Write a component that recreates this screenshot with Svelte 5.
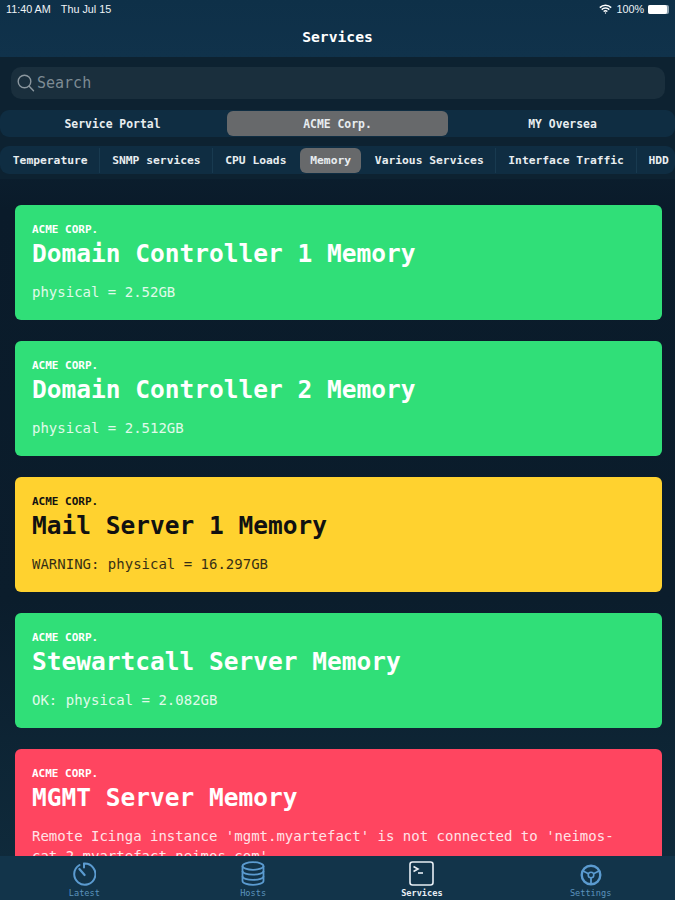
<script>
  const groups = ["Service Portal", "ACME Corp.", "MY Oversea"];
  const tabs = ["Temperature", "SNMP services", "CPU Loads", "Memory", "Various Services", "Interface Traffic", "HDD"];
  const services = [
    { name: "Domain Controller 1 Memory", output: "physical = 2.52GB", state: "ok" },
    { name: "Domain Controller 2 Memory", output: "physical = 2.512GB", state: "ok" },
    { name: "Mail Server 1 Memory", output: "WARNING: physical = 16.297GB", state: "warning" },
    { name: "Stewartcall Server Memory", output: "OK: physical = 2.082GB", state: "ok" },
    { name: "MGMT Server Memory", output: "Remote Icinga instance 'mgmt.myartefact' is not connected to 'neimos-cat-2.myartefact.neimos.com'", state: "critical" }
  ];
</script>

<div class="screen">
  <header class="top">
    <div class="status">
      <span class="clock">11:40 AM</span>
      <span>Thu Jul 15</span>
      <span class="spacer"></span>
      <svg class="wifi" width="13" height="10" viewBox="0 0 13 10" fill="none" stroke="#fff" stroke-width="1.5">
        <path d="M0.8 3.6 C4 0.4 9 0.4 12.2 3.6" />
        <path d="M2.7 5.6 C4.8 3.6 8.2 3.6 10.3 5.6" />
        <path d="M4.6 7.5 C5.7 6.6 7.3 6.6 8.4 7.5" />
        <circle cx="6.5" cy="9" r="0.7" fill="#fff" stroke="none" />
      </svg>
      <span>100%</span>
      <span class="battery"><span class="battery-fill"></span></span>
    </div>
    <h1>Services</h1>
  </header>

  <div class="filters">
    <div class="search">
      <svg width="18" height="18" viewBox="0 0 18 18" fill="none" stroke="#8b979f" stroke-width="1.4">
        <circle cx="7.5" cy="7.5" r="6.3" />
        <path d="M12.2 12.2 L16.5 16.8" stroke-linecap="round" />
      </svg>
      <span>Search</span>
    </div>

    <div class="segments">
      {#each groups as group, i}
        <div class="segment" class:active={i === 1}>{group}</div>
      {/each}
    </div>

    <div class="tabs">
      {#each tabs as tab, i}
        <div class="tab" class:active={tab === "Memory"} class:divided={i === 0 || i === 1 || i === 4 || i === 5}>{tab}</div>
      {/each}
    </div>
  </div>

  <main class="list">
    {#each services as service}
      <article class="card {service.state}">
        <p class="company">ACME CORP.</p>
        <h2>{service.name}</h2>
        <p class="output">{service.output}</p>
      </article>
    {/each}
  </main>

  <nav class="tabbar">
    <div class="item">
      <svg width="24" height="24" viewBox="0 0 24 24" fill="none" stroke="#5b9bd0" stroke-width="2">
        <path d="M7.5 3 A10.6 10.6 0 1 0 12 1.6 L12 5.4" stroke-linecap="round" />
        <path d="M7.4 7 L12.6 13" stroke-width="2.2" stroke-linecap="round" />
      </svg>
      <span>Latest</span>
    </div>
    <div class="item">
      <svg width="24" height="25" viewBox="0 0 24 25" fill="none" stroke="#5b9bd0" stroke-width="1.8">
        <ellipse cx="12" cy="5" rx="10.5" ry="3.8" />
        <path d="M1.5 5 V20 C1.5 22 6 23.8 12 23.8 C18 23.8 22.5 22 22.5 20 V5" />
        <path d="M1.5 10 C1.5 12 6 13.7 12 13.7 C18 13.7 22.5 12 22.5 10" />
        <path d="M1.5 15.2 C1.5 17.2 6 18.9 12 18.9 C18 18.9 22.5 17.2 22.5 15.2" />
      </svg>
      <span>Hosts</span>
    </div>
    <div class="item current">
      <svg width="25" height="25" viewBox="0 0 25 25" fill="none" stroke="#e8eef4" stroke-width="1.6">
        <rect x="1" y="1" width="23" height="23" rx="2.5" />
        <path d="M4.5 5.5 L9 8 L4.5 10.5" />
        <path d="M9 12 H14" />
      </svg>
      <span>Services</span>
    </div>
    <div class="item">
      <svg width="22" height="22" viewBox="0 0 22 22" fill="none" stroke="#5b9bd0">
        <circle cx="11" cy="11" r="9.3" stroke-width="2.4" />
        <circle cx="11" cy="11" r="2.8" stroke-width="1.6" />
        <path d="M8.5 9.7 L3 7 M13.5 9.7 L19 7 M11 13.8 V20" stroke-width="1.8" />
      </svg>
      <span>Settings</span>
    </div>
  </nav>
</div>

<style>
  :global(body) {
    background: #0c1f2e;
  }

  .screen {
    display: flex;
    flex-direction: column;
    width: 675px;
    height: 900px;
    overflow: hidden;
    font-family: "DejaVu Sans Mono", "Liberation Mono", monospace;
    color: #fff;
    background: linear-gradient(180deg, #0f2a3d 0, #0a1b2a 210px, #0b1d2c 600px, #0f2a3b 860px);
  }

  .top {
    flex: none;
    height: 57px;
    background: linear-gradient(180deg, #0e3048, #10324b);
  }

  .status {
    display: flex;
    align-items: center;
    gap: 4px;
    height: 18px;
    padding: 0 6px;
    font-family: "Liberation Sans", Arial, sans-serif;
    font-size: 10.8px;
    color: #eef3f6;
  }

  .clock {
    margin-right: 6px;
  }

  .spacer {
    flex: 1;
  }

  .battery {
    width: 21px;
    height: 9px;
    border-radius: 2px;
    background: #8ea2b0;
  }

  .battery-fill {
    display: block;
    width: 19px;
    height: 9px;
    border-radius: 2px;
    background: #fff;
  }

  h1 {
    margin: 10px 0 0;
    font-size: 14.7px;
    line-height: 17px;
    font-weight: 700;
    text-align: center;
  }

  .filters {
    flex: none;
    padding-top: 10px;
    height: 122px;
    box-sizing: border-box;
    background: #0d2231;
  }

  .search {
    display: flex;
    align-items: center;
    gap: 2px;
    height: 32px;
    margin: 0 10px 0 11px;
    padding-left: 6px;
    border-radius: 10px;
    background: #1a2f3d;
    color: #7d8b94;
    font-size: 15px;
  }

  .segments {
    display: grid;
    grid-template-columns: repeat(3, 1fr);
    height: 27px;
    margin-top: 11px;
    padding: 1px 0;
    box-sizing: border-box;
    border-radius: 9px;
    background: #0f2d42;
  }

  .segment {
    display: flex;
    align-items: center;
    justify-content: center;
    margin: 0 2px;
    border-radius: 6px;
    font-size: 11.4px;
    font-weight: 700;
    color: #e8edf0;
  }

  .segment.active {
    background: #67696b;
  }

  .tabs {
    display: flex;
    align-items: center;
    height: 28px;
    margin-top: 9px;
    padding-left: 1px;
    border-radius: 9px;
    background: #0f2d42;
    overflow: hidden;
    white-space: nowrap;
  }

  .tab {
    flex: none;
    display: flex;
    align-items: center;
    height: 25px;
    padding: 0 11.8px;
    font-size: 11.3px;
    font-weight: 700;
    color: #e8edf0;
    border-right: 1px solid transparent;
  }

  .tab.divided {
    border-right-color: #183a50;
  }

  .tab.active {
    margin: 0 2px 0 1px;
    padding: 0 10px;
    border-right: 0;
    border-radius: 6px;
    background: #67696b;
  }

  .list {
    flex: 1;
    min-height: 0;
    display: flex;
    flex-direction: column;
    gap: 21.1px;
    padding: 26px 13px 0 15px;
    overflow: hidden;
  }

  .card {
    flex: none;
    min-height: 115px;
    box-sizing: border-box;
    padding: 19px 17px 0;
    border-radius: 6px;
  }

  .card.ok {
    background: #30df78;
    color: #fff;
  }

  .card.warning {
    background: #ffd22f;
    color: #111;
  }

  .card.critical {
    background: #ff4560;
    color: #fff;
  }

  .company {
    margin: 0;
    font-size: 11px;
    line-height: 12px;
    font-weight: 700;
  }

  h2 {
    margin: 3px 0 0;
    font-size: 24.5px;
    line-height: 30px;
    font-weight: 700;
  }

  .output {
    margin: 13px 0 0;
    font-size: 14px;
    line-height: 20px;
    opacity: 0.85;
  }

  .tabbar {
    flex: none;
    display: grid;
    grid-template-columns: repeat(4, 1fr);
    height: 44px;
    background: #12344a;
  }

  .item {
    display: flex;
    flex-direction: column;
    align-items: center;
    justify-content: flex-end;
    height: 44px;
    padding-bottom: 2px;
    box-sizing: border-box;
    color: #5b93bd;
    font-size: 8.6px;
    line-height: 10px;
  }

  .item svg {
    margin-bottom: 2px;
  }

  .item.current {
    color: #e8eef4;
    font-weight: 700;
  }
</style>
